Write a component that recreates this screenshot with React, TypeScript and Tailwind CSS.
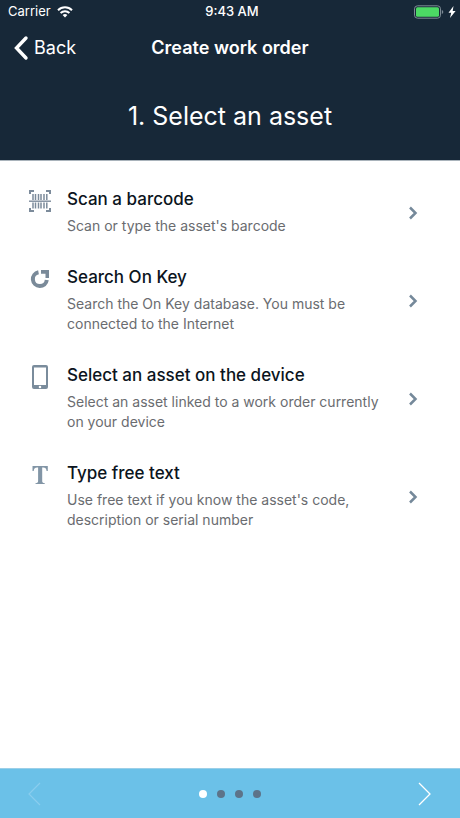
import type { ReactNode } from "react";

type Option = {
  title: string;
  description: string;
  icon: ReactNode;
};

const BarcodeIcon = () => (
  <svg width="24" height="24" viewBox="0 0 24 24" className="text-[#7c8b9b]" aria-hidden="true">
    <path
      d="M2 5V2h4M18 2h4v3M2 19v3h4M18 22h4v-3"
      fill="none"
      stroke="currentColor"
      strokeWidth="2"
    />
    <path
      d="M5 5v6M7.500 5v6M10.500 5v6M13 5v6M16 5v6M18.800 5v6M5 13.500v6M7.500 13.500v6M10.500 13.500v6M13 13.500v6M16 13.500v6M18.800 13.500v6"
      fill="none"
      stroke="currentColor"
      strokeWidth="1.500"
    />
    <path d="M1 12.200h22" stroke="currentColor" strokeWidth="1.400" />
  </svg>
);

const OnKeyIcon = () => (
  <svg width="24" height="24" viewBox="0 0 24 24" className="text-[#7a8a99]" aria-hidden="true">
    <path
      d="M10.500 5.200A7 7 0 1 0 18.800 13"
      fill="none"
      stroke="currentColor"
      strokeWidth="4"
    />
    <path d="M13 3h8v8h-3.500V6.800H13z" fill="currentColor" />
  </svg>
);

const DeviceIcon = () => (
  <svg width="24" height="26" viewBox="0 0 24 26" className="text-[#7a8c9c]" aria-hidden="true">
    <path
      fillRule="evenodd"
      fill="currentColor"
      d="M6 1h12a2 2 0 0 1 2 2v20a2 2 0 0 1-2 2H6a2 2 0 0 1-2-2V3a2 2 0 0 1 2-2zm0 2.500v17.500h12V3.500zM12 21.700a1.300 1.300 0 1 0 0 2.600 1.300 1.300 0 0 0 0-2.600z"
    />
  </svg>
);

const TextIcon = () => (
  <svg width="24" height="24" viewBox="0 0 24 24" className="text-[#8295a6]" aria-hidden="true">
    <path
      fill="currentColor"
      d="M4.500 3h15.300v5h-1.200c-.4-2.400-1.300-3.400-3.400-3.400h-1V18c0 1.600.5 2 2.600 2.200V21H7.500v-.8c2.100-.2 2.600-.6 2.600-2.200V4.600h-1C7 4.600 6.100 5.600 5.700 8H4.500z"
    />
  </svg>
);

const options: Option[] = [
  {
    title: "Scan a barcode",
    description: "Scan or type the asset's barcode",
    icon: <BarcodeIcon />,
  },
  {
    title: "Search On Key",
    description: "Search the On Key database. You must be connected to the Internet",
    icon: <OnKeyIcon />,
  },
  {
    title: "Select an asset on the device",
    description: "Select an asset linked to a work order currently on your device",
    icon: <DeviceIcon />,
  },
  {
    title: "Type free text",
    description: "Use free text if you know the asset's code, description or serial number",
    icon: <TextIcon />,
  },
];

const StatusBar = () => (
  <div className="grid grid-cols-3 items-center h-6 pl-2 pr-1 text-[13px]">
    <div className="flex items-center gap-1.5">
      <span>Carrier</span>
      <svg width="16" height="12" viewBox="0 0 16 12" aria-hidden="true">
        <path
          d="M1 4.200a10 10 0 0 1 14 0M3.600 7a6.300 6.300 0 0 1 8.800 0"
          fill="none"
          stroke="currentColor"
          strokeWidth="2"
        />
        <path d="M8 11.500 5.600 9.100a3.400 3.400 0 0 1 4.800 0z" fill="currentColor" />
      </svg>
    </div>
    <span className="text-center font-medium">9:43 AM</span>
    <div className="flex items-center justify-end gap-1">
      <svg width="30" height="14" viewBox="0 0 30 14" aria-hidden="true">
        <rect x=".5" y=".8" width="26" height="12.400" rx="3" fill="none" stroke="#7d8a94" />
        <rect x="2" y="2.300" width="23" height="9.400" rx="1.500" fill="#4cd964" />
        <path d="M27.800 5v4q1.500-.6 1.500-2t-1.500-2" fill="#7d8a94" />
      </svg>
      <svg width="8" height="12" viewBox="0 0 8 12" aria-hidden="true">
        <path d="M5.500 0 .5 6.800h2.700L2 12 7.600 5H4.700z" fill="currentColor" />
      </svg>
    </div>
  </div>
);

const OptionRow = ({ title, description, icon }: Option) => (
  <li>
    <a href="#" className="flex pb-[29px]">
      <span className="flex w-6 h-7 shrink-0 items-center justify-center">{icon}</span>
      <span className="flex-1 ml-[15px]">
        <span className="block text-[17px] leading-6 font-medium text-[#0b1420]">{title}</span>
        <span className="block mt-[5px] text-sm leading-5 text-[#6a6c70]">{description}</span>
      </span>
      <span className="flex w-16 shrink-0 items-center pt-0.5 pl-5 text-[#75899a]">
        <svg width="12" height="14" viewBox="0 0 12 14" aria-hidden="true">
          <path d="m2 1.500 5.500 5.500L2 12.500" fill="none" stroke="currentColor" strokeWidth="2.500" />
        </svg>
      </span>
    </a>
  </li>
);

const App = () => {
  return (
    <div className="flex min-h-screen flex-col bg-white font-[Inter,sans-serif]">
      <header className="bg-[#172838] text-white border-b border-[#a9b3bb]">
        <StatusBar />
        <div className="grid grid-cols-[1fr_auto_1fr] items-center h-12 px-3">
          <button type="button" className="flex items-center gap-1 text-lg">
            <svg width="18" height="26" viewBox="0 0 18 26" aria-hidden="true">
              <path
                d="M14 3 4.500 13 14 23"
                fill="none"
                stroke="currentColor"
                strokeWidth="3.400"
                strokeLinecap="round"
              />
            </svg>
            Back
          </button>
          <h1 className="text-lg font-semibold">Create work order</h1>
        </div>
        <h2 className="pt-7 pb-7 text-center text-[25px] leading-8">1. Select an asset</h2>
      </header>

      <main className="flex-1 pt-[26px] pl-7 pr-2">
        <ul>
          {options.map((option) => (
            <OptionRow key={option.title} {...option} />
          ))}
        </ul>
      </main>

      <footer className="flex items-center justify-between h-[50px] px-7 bg-[#6bc1e8] border-t border-[#9bcfe8]">
        <button type="button" aria-label="Previous" disabled className="text-[#8acdee]">
          <svg width="14" height="24" viewBox="0 0 14 24" aria-hidden="true">
            <path d="M12 1 1 12l11 11" fill="none" stroke="currentColor" strokeWidth="1.200" />
          </svg>
        </button>
        <div className="flex gap-[10px]">
          <span className="size-2 rounded-full bg-white" />
          <span className="size-2 rounded-full bg-[#5d7389]" />
          <span className="size-2 rounded-full bg-[#5d7389]" />
          <span className="size-2 rounded-full bg-[#5d7389]" />
        </div>
        <button type="button" aria-label="Next" className="text-white">
          <svg width="14" height="24" viewBox="0 0 14 24" aria-hidden="true">
            <path d="m1 1 11 11L1 23" fill="none" stroke="currentColor" strokeWidth="1.300" />
          </svg>
        </button>
      </footer>
    </div>
  );
};

export default App;
